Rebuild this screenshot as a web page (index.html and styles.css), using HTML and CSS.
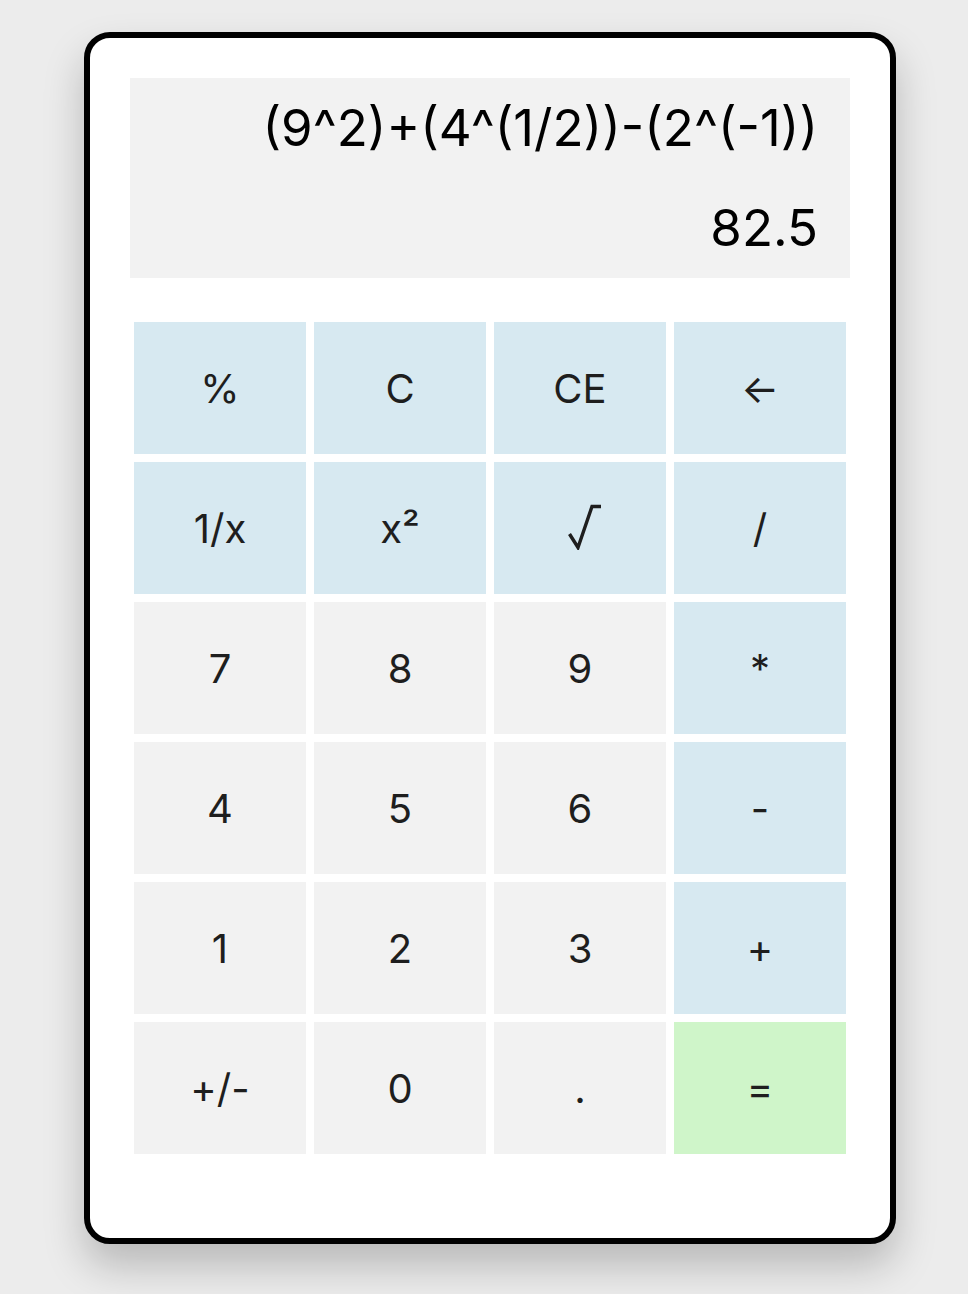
FILE: index.html
```html
<!DOCTYPE html>
<html lang="en">
<head>
<meta charset="utf-8">
<title>Calculator</title>
<link rel="stylesheet" href="styles.css">
</head>
<body>
<div class="calc">
  <div class="display">
    <div class="expr">(9^2)+(4^(1/2))-(2^(-1))</div>
    <div class="result">82.5</div>
  </div>
  <div class="keys">
    <div class="key op">%</div>
    <div class="key op">C</div>
    <div class="key op">CE</div>
    <div class="key op">←</div>
    <div class="key op">1/x</div>
    <div class="key op">x²</div>
    <div class="key op root" aria-label="√"><svg class="root-icon" width="34" height="46" viewBox="0 0 34 46"><path d="M1.5 30 L10 43.5 L24 2.5 L33 2.5" fill="none" stroke="#1e1e1e" stroke-width="3.4" stroke-linejoin="miter"/></svg></div>
    <div class="key op">/</div>
    <div class="key">7</div>
    <div class="key">8</div>
    <div class="key">9</div>
    <div class="key op">*</div>
    <div class="key">4</div>
    <div class="key">5</div>
    <div class="key">6</div>
    <div class="key op">-</div>
    <div class="key">1</div>
    <div class="key">2</div>
    <div class="key">3</div>
    <div class="key op">+</div>
    <div class="key">+/-</div>
    <div class="key">0</div>
    <div class="key">.</div>
    <div class="key eq">=</div>
  </div>
</div>
</body>
</html>
```
FILE: styles.css
```css
html, body {
  margin: 0;
  background: #ececec;
}
body {
  padding: 32px 0 0 84px;
  height: 1294px;
  box-sizing: border-box;
  font-family: Inter, "Noto Sans", sans-serif;
}
.calc {
  width: 812px;
  box-sizing: border-box;
  background: #fff;
  border: 6px solid #000;
  border-radius: 26px;
  padding: 40px 40px 80px;
  box-shadow: 0 22px 40px rgba(0, 0, 0, 0.22);
}
.display {
  background: #f2f2f2;
  height: 200px;
  padding-right: 32px;
  color: #000;
  font-size: 51px;
  text-align: right;
}
.expr, .result {
  height: 100px;
  line-height: 100px;
}
.keys {
  margin-top: 40px;
  display: grid;
  grid-template-columns: repeat(4, 1fr);
}
.key {
  margin: 4px;
  height: 132px;
  display: flex;
  align-items: center;
  justify-content: center;
  background: #f2f2f2;
  color: #1e1e1e;
  font-size: 40px;
}
.key.op {
  background: #d7e9f1;
}
.key.eq {
  background: #cff5c9;
}
.root-icon {
  display: block;
  margin: 0 0 3px 10px;
}
```
